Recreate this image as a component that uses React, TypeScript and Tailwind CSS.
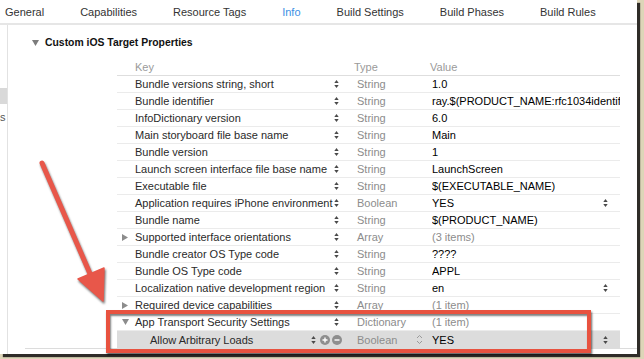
import React from "react";

interface PlistRow {
  key: string;
  type: string;
  value: string;
  disclosure?: "right" | "down";
  indent?: boolean;
  dimValue?: boolean;
  valueStepper?: boolean;
  selected?: boolean;
}

const tabs = ["General", "Capabilities", "Resource Tags", "Info", "Build Settings", "Build Phases", "Build Rules"];

const rows: PlistRow[] = [
  { key: "Bundle versions string, short", type: "String", value: "1.0" },
  { key: "Bundle identifier", type: "String", value: "ray.$(PRODUCT_NAME:rfc1034identifier)" },
  { key: "InfoDictionary version", type: "String", value: "6.0" },
  { key: "Main storyboard file base name", type: "String", value: "Main" },
  { key: "Bundle version", type: "String", value: "1" },
  { key: "Launch screen interface file base name", type: "String", value: "LaunchScreen" },
  { key: "Executable file", type: "String", value: "$(EXECUTABLE_NAME)" },
  { key: "Application requires iPhone environment", type: "Boolean", value: "YES", valueStepper: true },
  { key: "Bundle name", type: "String", value: "$(PRODUCT_NAME)" },
  { key: "Supported interface orientations", type: "Array", value: "(3 items)", disclosure: "right", dimValue: true },
  { key: "Bundle creator OS Type code", type: "String", value: "????" },
  { key: "Bundle OS Type code", type: "String", value: "APPL" },
  { key: "Localization native development region", type: "String", value: "en", valueStepper: true },
  { key: "Required device capabilities", type: "Array", value: "(1 item)", disclosure: "right", dimValue: true },
  { key: "App Transport Security Settings", type: "Dictionary", value: "(1 item)", disclosure: "down", dimValue: true },
  { key: "Allow Arbitrary Loads", type: "Boolean", value: "YES", indent: true, valueStepper: true, selected: true },
];

function Stepper() {
  return (
    <svg width="5" height="10" viewBox="0 0 5 10" className="block">
      <path d="M0.3 4 L2.5 1 L4.7 4 Z" fill="#4a4a4a" />
      <path d="M0.3 6 L2.5 9 L4.7 6 Z" fill="#4a4a4a" />
    </svg>
  );
}

function Triangle({ dir }: { dir: "right" | "down" }) {
  return dir === "right" ? (
    <svg width="6" height="7" viewBox="0 0 6 7" className="block">
      <path d="M0 0 L6 3.5 L0 7 Z" fill="#8c8c8c" />
    </svg>
  ) : (
    <svg width="7" height="6" viewBox="0 0 7 6" className="block">
      <path d="M0 0 L7 0 L3.5 6 Z" fill="#8c8c8c" />
    </svg>
  );
}

function CircleButton({ minus }: { minus?: boolean }) {
  return (
    <svg width="10" height="10" viewBox="0 0 10 10" className="block">
      <circle cx="5" cy="5" r="5" fill="#8e8e8e" />
      <path d={minus ? "M2.5 5 H7.5" : "M2.5 5 H7.5 M5 2.5 V7.5"} stroke="#fff" strokeWidth="1.4" />
    </svg>
  );
}

export default function App() {
  return (
    <div
      className="relative h-[359px] w-[644px] overflow-hidden bg-[#ddd5b8] text-[11px] leading-[12px] text-[#2a2a2a]"
      style={{ fontFamily: '"Liberation Sans", Arial, sans-serif' }}
    >
      <div className="relative flex h-[354px] w-[637px] flex-col bg-white shadow-[3px_3px_1px_#2f2c28]">
        {/* Tab bar */}
        <div className="flex h-[25px] flex-shrink-0 items-center gap-[36px] border-b-2 border-[#e6e6e6] pl-[5px]">
          {tabs.map((tab) => (
            <span key={tab} className={tab === "Info" ? "text-[#3b8fe4]" : "text-[#333]"}>
              {tab}
            </span>
          ))}
        </div>

        <div className="flex flex-1">
          {/* Sidebar sliver */}
          <div className="w-[8px] flex-shrink-0 border-r border-[#e2e2e2]">
            <div className="mt-[63px] h-[16px] w-[7px] bg-[#d9d9d9]" />
            <div className="mt-[7px] text-[#555]">s</div>
          </div>

          {/* Content */}
          <div className="flex flex-1 flex-col">
            <div className="mt-[12px] flex h-[12px] items-center">
              <span className="ml-[24px]">
                <svg width="7" height="6" viewBox="0 0 7 6" className="block">
                  <path d="M0 0 L7 0 L3.5 6 Z" fill="#7c7c7c" />
                </svg>
              </span>
              <span className="ml-[6px] text-[10.4px] font-bold text-[#111]">Custom iOS Target Properties</span>
            </div>

            {/* Property table */}
            <div className="ml-[109px] mt-[9px] w-[503px]">
              <div className="flex h-[18px] items-center border-b border-[#dedede] text-[#9a9a9a]">
                <div className="w-[237px] pl-[18px]">Key</div>
                <div className="w-[76px]">Type</div>
                <div>Value</div>
              </div>

              {rows.map((row, i) => (
                <div
                  key={row.key}
                  className={`flex h-[17px] items-center ${i === rows.length - 1 ? "" : "border-b border-[#ebebeb]"} ${
                    row.selected ? "bg-[#dcdcdc]" : ""
                  }`}
                >
                  <div
                    className={`flex items-center overflow-hidden whitespace-nowrap pl-[5px] ${
                      row.selected ? "w-[190px]" : "w-[216px]"
                    }`}
                  >
                    <span className={`flex w-[13px] flex-shrink-0 items-center ${row.indent ? "ml-[15px]" : ""}`}>
                      {row.disclosure && <Triangle dir={row.disclosure} />}
                    </span>
                    <span>{row.key}</span>
                  </div>

                  {row.selected ? (
                    <div className="flex w-[50px] flex-shrink-0 items-center pl-[4px]">
                      <Stepper />
                      <span className="ml-[4px]">
                        <CircleButton />
                      </span>
                      <span className="ml-[2px]">
                        <CircleButton minus />
                      </span>
                    </div>
                  ) : (
                    <div className="w-[24px] flex-shrink-0 pl-[1px]">
                      <Stepper />
                    </div>
                  )}

                  <div className="flex w-[75px] flex-shrink-0 items-center text-[#8c8c8c]">
                    <span>{row.type}</span>
                    {row.selected && (
                      <svg width="7" height="11" viewBox="0 0 7 11" className="ml-auto mr-[9px] block">
                        <path d="M1 4 L3.5 1.5 L6 4 M1 7 L3.5 9.5 L6 7" stroke="#9a9a9a" strokeWidth="1" fill="none" />
                      </svg>
                    )}
                  </div>

                  <div
                    className={`min-w-0 flex-1 overflow-hidden whitespace-nowrap ${
                      row.dimValue ? "text-[#8c8c8c]" : "text-black"
                    }`}
                  >
                    {row.value}
                  </div>

                  {row.valueStepper && (
                    <div className="w-[20px] flex-shrink-0 pl-[3px]">
                      <Stepper />
                    </div>
                  )}
                </div>
              ))}
            </div>

            <div className="ml-[17px] border-t border-[#dcdcdc]" />
          </div>
        </div>

        {/* Red highlight box */}
        <div className="absolute left-[106px] top-[310px] h-[43px] w-[485px] border-[4px] border-[#e8523f] shadow-[1px_2px_2px_rgba(0,0,0,0.6),inset_1px_2px_2px_rgba(0,0,0,0.5)]" />

        {/* Arrow */}
        <svg
          className="pointer-events-none absolute left-0 top-0 drop-shadow-[1px_2px_1px_rgba(0,0,0,0.55)]"
          width="637"
          height="354"
          viewBox="0 0 637 354"
        >
          <line x1="42" y1="163" x2="91" y2="276" stroke="#e8574a" strokeWidth="5" strokeLinecap="round" />
          <path d="M78 279 L104 268 L103 301 Z" fill="#e8574a" stroke="#e8574a" strokeWidth="1.5" strokeLinejoin="round" />
        </svg>
      </div>
    </div>
  );
}
